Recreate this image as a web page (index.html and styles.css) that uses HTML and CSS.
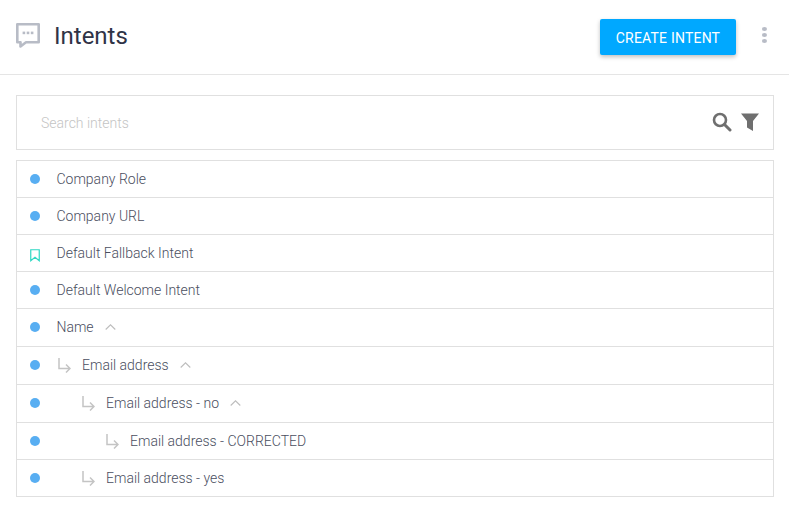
FILE: index.html
```html
<!DOCTYPE html>
<html lang="en">
<head>
<meta charset="utf-8">
<title>Intents</title>
<link rel="stylesheet" href="styles.css">
</head>
<body>
<header class="header">
  <svg class="chat-icon" width="26" height="26" viewBox="0 0 26 26"><path d="M2.300 2.300h21.400v18H11l-5.500 4.200v-4.200H2.300z" fill="none" stroke="#b8bcc6" stroke-width="2.600" stroke-linejoin="round"/><rect x="7.600" y="9.600" width="2.600" height="2.600" fill="#b8bcc6"/><rect x="11.700" y="9.600" width="2.600" height="2.600" fill="#b8bcc6"/><rect x="15.800" y="9.600" width="2.600" height="2.600" fill="#b8bcc6"/></svg>
  <h1 class="title">Intents</h1>
  <button class="create-btn">CREATE INTENT</button>
  <div class="more"><span></span><span></span><span></span></div>
</header>
<main class="content">
  <div class="search">
    <span class="search-text">Search intents</span>
    <svg class="search-icon" width="20" height="20" viewBox="0 0 20 20"><circle cx="8" cy="8" r="6" fill="none" stroke="#6f6f6f" stroke-width="2.600"/><path d="M12.500 12.500L18 18" stroke="#6f6f6f" stroke-width="3" stroke-linecap="round"/></svg>
    <svg class="filter-icon" width="18" height="18" viewBox="0 0 18 18"><path d="M0 0.500h18L12 8V18l-6-3.500V8z" fill="#6f6f6f"/></svg>
  </div>
  <ul class="list">
    <li class="row"><i class="dot"></i><span class="label">Company Role</span></li>
    <li class="row"><i class="dot"></i><span class="label">Company URL</span></li>
    <li class="row"><svg class="mark" width="10" height="13" viewBox="0 0 10 13"><path d="M.750.750h8.500v11L5 8.300.750 11.750z" fill="none" stroke="#2ed8c3" stroke-width="1.200"/></svg><span class="label">Default Fallback Intent</span></li>
    <li class="row"><i class="dot"></i><span class="label">Default Welcome Intent</span></li>
    <li class="row tall"><i class="dot"></i><span class="label">Name</span><svg class="chev" width="11" height="6" viewBox="0 0 11 6"><path d="M.700 5.500L5.500.800l4.800 4.700" fill="none" stroke="#bdbdbd" stroke-width="1.100"/></svg></li>
    <li class="row tall"><i class="dot"></i><svg class="arrow d1" width="13" height="15" viewBox="0 0 13 15"><path d="M1 0v10.500h11M8 6.500l4 4-4 4" fill="none" stroke="#c4c4c4" stroke-width="1.500"/></svg><span class="label">Email address</span><svg class="chev" width="11" height="6" viewBox="0 0 11 6"><path d="M.700 5.500L5.500.800l4.800 4.700" fill="none" stroke="#bdbdbd" stroke-width="1.100"/></svg></li>
    <li class="row tall"><i class="dot"></i><svg class="arrow d2" width="13" height="15" viewBox="0 0 13 15"><path d="M1 0v10.500h11M8 6.500l4 4-4 4" fill="none" stroke="#c4c4c4" stroke-width="1.500"/></svg><span class="label">Email address - no</span><svg class="chev" width="11" height="6" viewBox="0 0 11 6"><path d="M.700 5.500L5.500.800l4.800 4.700" fill="none" stroke="#bdbdbd" stroke-width="1.100"/></svg></li>
    <li class="row"><i class="dot"></i><svg class="arrow d3" width="13" height="15" viewBox="0 0 13 15"><path d="M1 0v10.500h11M8 6.500l4 4-4 4" fill="none" stroke="#c4c4c4" stroke-width="1.500"/></svg><span class="label">Email address - CORRECTED</span></li>
    <li class="row"><i class="dot"></i><svg class="arrow d2" width="13" height="15" viewBox="0 0 13 15"><path d="M1 0v10.500h11M8 6.500l4 4-4 4" fill="none" stroke="#c4c4c4" stroke-width="1.500"/></svg><span class="label">Email address - yes</span></li>
  </ul>
</main>
</body>
</html>
```
FILE: styles.css
```css
* { box-sizing: border-box; }
html, body { margin: 0; padding: 0; background: #fff; }
body { font-family: Roboto, "Liberation Sans", sans-serif; color: #4f5364; }
.header {
  display: flex;
  align-items: center;
  height: 75px;
  padding: 0 16px 0 15px;
  border-bottom: 1px solid #e5e5e5;
}
.chat-icon { margin-right: 13px; margin-top: -5px; }
.title { margin: -3px 0 0; flex: 1; font-size: 24px; font-weight: 400; color: #2f3346; }
.create-btn {
  width: 136px;
  height: 36px;
  padding: 1px 0 0;
  border: 0;
  border-radius: 2px;
  background: #00a8ff;
  color: #fff;
  font: 400 14px Roboto, sans-serif;
  letter-spacing: 0.2px;
  box-shadow: 0 2px 4px rgba(0,0,0,.25);
}
.more { display: flex; flex-direction: column; gap: 2px; margin: -4px 6px 0 26px; }
.more span { width: 5px; height: 4px; border-radius: 50%; background: #b8bcc6; }
.content { padding: 20px 15px 0 16px; }
.search {
  display: flex;
  align-items: center;
  height: 55px;
  padding: 0 14px 0 24px;
  border: 1px solid #e0e0e0;
}
.search-text { flex: 1; font-size: 14px; font-weight: 300; color: #c4c4c4; }
.search-icon { margin-right: 9px; margin-top: -2px; }
.filter-icon { margin-top: -1px; }
.list { list-style: none; margin: 10px 0 0; padding: 0; border: 1px solid #e0e0e0; border-bottom: 0; }
.row {
  display: flex;
  align-items: center;
  height: 37px;
  padding-left: 13px;
  border-bottom: 1px solid #e0e0e0;
  font-size: 14px;
}
.tall { height: 38px; padding-bottom: 1px; }
.dot { flex: none; width: 10px; height: 10px; border-radius: 50%; background: #58aef2; margin-right: 16.5px; }
.mark { flex: none; margin-right: 16.5px; margin-top: 4px; }
.label { font-weight: 300; color: #4a4e60; }
.arrow { flex: none; margin-right: 11px; }
.d1 { margin-left: 1.5px; }
.d2 { margin-left: 25.5px; }
.d3 { margin-left: 49.5px; }
.chev { margin-left: 11px; }
```
